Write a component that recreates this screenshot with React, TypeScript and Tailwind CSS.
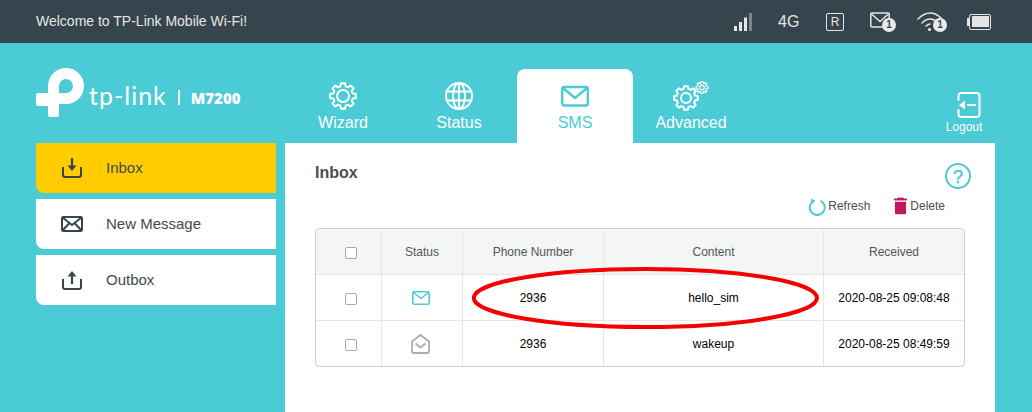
import React from "react";

function gearPath(cx: number, cy: number, ro: number, ri: number, teeth = 8) {
  const pts: string[] = [];
  const step = (Math.PI * 2) / teeth;
  for (let i = 0; i < teeth; i++) {
    const a = i * step - Math.PI / 2;
    const p = (r: number, d: number) => `${(cx + r * Math.cos(a + d * step)).toFixed(2)} ${(cy + r * Math.sin(a + d * step)).toFixed(2)}`;
    pts.push(`${i === 0 ? "M" : "L"}${p(ri, -0.34)}`, `L${p(ro, -0.2)}`, `L${p(ro, 0.2)}`, `L${p(ri, 0.34)}`);
  }
  return pts.join(" ") + " Z";
}

const Gear = () => (
  <svg width="28" height="28" viewBox="0 0 28 28" fill="none" stroke="white" strokeWidth="2" strokeLinejoin="round">
    <path d={gearPath(14, 14, 13, 10)} />
    <circle cx="14" cy="14" r="6" />
  </svg>
);

const Globe = () => (
  <svg width="28" height="28" viewBox="0 0 28 28" fill="none" stroke="white" strokeWidth="2">
    <circle cx="14" cy="14" r="13" />
    <ellipse cx="14" cy="14" rx="6" ry="13" />
    <path d="M14 1v26M2.5 9.5h23M2.5 18.500h23" />
  </svg>
);

const TabMail = () => (
  <svg width="28" height="28" viewBox="0 0 28 28" fill="none" stroke="#4acbd6" strokeWidth="2.4" strokeLinejoin="round">
    <rect x="1.200" y="5" width="25.600" height="18.500" rx="2" />
    <path d="M2 6l12 10L26 6" />
  </svg>
);

const GearDouble = () => (
  <svg width="36" height="30" viewBox="0 0 36 30" fill="none" stroke="white" strokeLinejoin="round">
    <g strokeWidth="2">
      <path d={gearPath(13, 17, 12, 9.400)} />
      <circle cx="13" cy="17" r="5" />
    </g>
    <g strokeWidth="1.300">
      <path d={gearPath(29, 6.500, 6, 4.600)} />
      <circle cx="29" cy="6.500" r="2.300" />
    </g>
  </svg>
);

const Logo = () => (
  <svg width="48" height="49" viewBox="0 0 48 49" fill="white" fillRule="evenodd" aria-hidden className="shrink-0">
    <path d="M12 18A18 18 0 1 1 30 36H23V47Q23 49 21 49H14Q12 49 12 47V38H2Q0 38 0 36V27Q0 25 2 25H12Z M23 25V18A7 7 0 1 1 30 25Z" />
  </svg>
);

const StatusIcons = () => (
  <div className="flex items-center">
    <svg width="18" height="18" viewBox="0 0 18 18">
      <rect x="0" y="13" width="3" height="5" fill="#e6e6e6" />
      <rect x="5" y="9" width="3" height="9" fill="#e6e6e6" />
      <rect x="10" y="4.500" width="3" height="13.500" fill="#e6e6e6" />
      <rect x="15" y="0" width="3" height="18" fill="#7a858a" />
    </svg>
    <span className="ml-[26px] w-[22px] text-[16px] leading-[20px] text-[#e6e6e6]">4G</span>
    <div className="ml-[26px] flex h-[18px] w-[18px] items-center justify-center rounded-[2px] border-[1.500px] border-[#e6e6e6] text-[12px] leading-none text-[#e6e6e6]">R</div>
    <div className="relative ml-[26px] h-[20px] w-[26px]">
      <svg width="20" height="16" viewBox="0 0 20 16" fill="none" stroke="#e6e6e6" strokeWidth="1.500" className="absolute left-0 top-0">
        <rect x="0.800" y="1" width="18.400" height="14" rx="1" />
        <path d="M1 1.500l9 8 9-8" />
      </svg>
      <div className="absolute left-[12px] top-[6px] flex h-[14px] w-[14px] items-center justify-center rounded-full bg-[#e9e9e9] text-[10px] font-bold leading-none text-[#36454d]">1</div>
    </div>
    <div className="relative ml-[21px] h-[20px] w-[30px]">
      <svg width="26" height="20" viewBox="0 0 26 20" fill="none" stroke="#e6e6e6" strokeWidth="1.500" className="absolute left-0 top-0" strokeLinecap="round">
        <path d="M1 7C5 3 9 1 13 1s8 2 11 5" />
        <path d="M5 11c2.500-2.500 5-4 8-4s5 1 7 3" />
        <path d="M9 14c1.300-1 2.500-2 4-2" />
        <circle cx="12.500" cy="17.500" r="0.800" fill="#e6e6e6" />
      </svg>
      <div className="absolute left-[16px] top-[6px] flex h-[14px] w-[14px] items-center justify-center rounded-full bg-[#e9e9e9] text-[10px] font-bold leading-none text-[#36454d]">1</div>
    </div>
    <div className="ml-[20px] flex h-[16px] items-center">
      <div className="h-[8px] w-[2px] bg-[#e6e6e6]" />
      <div className="h-[16px] w-[22px] rounded-[2px] border-[1.500px] border-[#e6e6e6] p-[1.500px]">
        <div className="h-full w-full bg-[#e4e4e4]" />
      </div>
    </div>
  </div>
);

const tabs = [
  { label: "Wizard", icon: <Gear /> },
  { label: "Status", icon: <Globe /> },
  { label: "SMS", icon: <TabMail />, active: true },
  { label: "Advanced", icon: <GearDouble /> },
];

const InboxIcon = () => (
  <svg width="22" height="22" viewBox="0 0 22 22" fill="none" stroke="#36454d" strokeWidth="2">
    <path d="M2 10v8q0 2 2 2h14q2 0 2-2v-8" />
    <path d="M11 1v8" strokeWidth="2.200" />
    <path d="M6.500 8.500h9L11 14z" fill="#36454d" strokeWidth="0" />
  </svg>
);
const OutboxIcon = () => (
  <svg width="22" height="22" viewBox="0 0 22 22" fill="none" stroke="#36454d" strokeWidth="2">
    <path d="M2 10v8q0 2 2 2h14q2 0 2-2v-8" />
    <path d="M11 7v8" strokeWidth="2.200" />
    <path d="M6.500 7.500h9L11 2z" fill="#36454d" strokeWidth="0" />
  </svg>
);
const NewMsgIcon = () => (
  <svg width="22" height="16" viewBox="0 0 22 16" fill="none" stroke="#36454d" strokeWidth="2" strokeLinejoin="round">
    <rect x="1" y="1" width="20" height="14" rx="1.500" />
    <path d="M1.500 1.500L11 9l9.500-7.500M1.500 14.500L8 7.500M20.500 14.500L14 7.500" />
  </svg>
);

const side = [
  { label: "Inbox", icon: <InboxIcon />, active: true },
  { label: "New Message", icon: <NewMsgIcon /> },
  { label: "Outbox", icon: <OutboxIcon /> },
];

const Check = () => <div className="ml-[5px] mt-[2px] h-[12px] w-[12px] rounded-[2px] border border-[#a9a9a9] bg-white" />;

const ReadMail = () => (
  <svg width="19" height="20" viewBox="0 0 19 20" fill="none" stroke="#adadad" strokeWidth="1.800" strokeLinejoin="round" className="mr-[3px]">
    <path d="M1 7.500L9.500 1 18 7.500V17.500q0 1.500-1.500 1.500h-14Q1 19 1 17.500z" />
    <path d="M4.500 9.500L9.500 13.500 14.500 9.500" />
  </svg>
);
const NewMail = () => (
  <svg width="18" height="14" viewBox="0 0 18 14" fill="none" stroke="#4acbd6" strokeWidth="1.600" strokeLinejoin="round" className="mr-[3px]">
    <rect x="0.800" y="0.800" width="16.400" height="12.400" rx="1.500" />
    <path d="M1.500 1.500L9 7.500l7.500-6" />
  </svg>
);

const rows = [
  { icon: <NewMail />, phone: "2936", content: "hello_sim", date: "2020-08-25 09:08:48" },
  { icon: <ReadMail />, phone: "2936", content: "wakeup", date: "2020-08-25 08:49:59" },
];

const cols = "grid grid-cols-[65px_81px_141px_220px_1fr]";
const cell = "flex items-center justify-center border-l border-[#e6e6e6] first:border-l-0";

export default function App() {
  return (
    <div className="relative h-[412px] w-[1032px] overflow-hidden bg-[#4acbd6] font-['Liberation_Sans',Arial,sans-serif]">
      <header className="flex h-[43px] items-center justify-between bg-[#36454d] pl-[36px] pr-[41px]">
        <span className="text-[14px] text-[#e6e6e6]">Welcome to TP-Link Mobile Wi-Fi!</span>
        <StatusIcons />
      </header>

      <div className="flex h-[100px]">
        <div className="ml-[36px] flex w-[249px] items-start pt-[25px]">
          <Logo />
          <span className="ml-[5px] mt-[9px] font-['Lato',sans-serif] text-[25px] font-normal leading-[36px] tracking-[1px] text-white">tp-link</span>
          <div className="ml-[11px] mt-[22px] h-[15px] w-[2px] bg-white" />
          <span className="ml-[11px] mt-[20px] font-['Open_Sans',sans-serif] text-[15px] font-extrabold leading-[20px] text-white">M7200</span>
        </div>
        <nav className="flex items-end">
          {tabs.map((t) => (
            <div key={t.label} className={`flex h-[74px] w-[116px] flex-col items-center rounded-t-[8px] ${t.active ? "bg-white text-[#4acbd6]" : "text-white"}`}>
              <div className="mt-[13px] flex h-[28px] items-center justify-center">{t.icon}</div>
              <span className="mt-[1px] text-[16px] leading-[24px]">{t.label}</span>
            </div>
          ))}
        </nav>
        <div className="ml-auto mr-[49px] flex w-[38px] flex-col items-center pt-[49px]">
          <svg width="24" height="26" viewBox="0 0 24 26" fill="none" stroke="white" strokeWidth="2" className="ml-[10px]">
            <path d="M1.500 8V4q0-3 3-3h15q3 0 3 3v18q0 3-3 3h-15q-3 0-3-3v-4" strokeLinecap="round" />
            <path d="M2 13l6-4.500v9z" fill="white" stroke="none" />
            <path d="M10 13h9" />
          </svg>
          <span className="mt-[2px] whitespace-nowrap text-[12px] leading-[14px] text-white">Logout</span>
        </div>
      </div>

      <div className="flex h-[269px]">
        <aside className="ml-[36px] flex w-[240px] flex-col gap-[6px]">
          {side.map((s) => (
            <div key={s.label} className={`flex h-[50px] items-center rounded-bl-[8px] ${s.active ? "bg-[#ffcc00]" : "bg-white"}`}>
              <div className="ml-[25px] flex w-[22px] items-center justify-center">{s.icon}</div>
              <span className="ml-[23px] text-[15px] text-[#414b50]">{s.label}</span>
            </div>
          ))}
        </aside>
        <main className="ml-[9px] w-[710px] bg-white px-[30px]">
          <div className="flex h-[41px] items-start justify-between">
            <h2 className="mt-[20px] text-[16px] font-bold leading-[20px] text-[#4d4d4d]">Inbox</h2>
            <svg width="26" height="26" viewBox="0 0 26 26" fill="none" stroke="#4acbd6" strokeWidth="2" className="mr-[-6px] mt-[20px]">
              <circle cx="13" cy="13" r="12" />
              <text x="13" y="19.500" textAnchor="middle" fontSize="18" fill="#4acbd6" stroke="#4acbd6" strokeWidth="0.500" fontFamily="Liberation Sans">?</text>
            </svg>
          </div>
          <div className="flex h-[44px] items-center justify-end pr-[20px]">
            <svg width="18" height="18" viewBox="0 0 18 18" fill="none" stroke="#4acbd6" strokeWidth="2" className="mr-[2px] mt-[2px]">
              <path d="M6 2.800A7.500 7.500 0 1 0 12.500 2.800" />
              <path d="M2.700 0.500l4.500 2-3 3.500z" fill="#4acbd6" stroke="none" />
            </svg>
            <span className="text-[12px] text-[#4d4d4d]">Refresh</span>
            <svg width="13" height="18" viewBox="0 0 14 18" className="ml-[24px] mr-[3px]" fill="#c2185b">
              <rect x="0" y="1" width="14" height="2" />
              <rect x="3.500" y="0" width="7" height="2" />
              <path d="M1 4.500h12V16q0 2-2 2H3q-2 0-2-2z" />
            </svg>
            <span className="text-[12px] text-[#4d4d4d]">Delete</span>
          </div>
          <div className="overflow-hidden rounded-[4px] border border-[#cfcfcf] text-[12px]">
            <div className={`${cols} h-[45px] bg-[#f4f5f5] bg-[radial-gradient(#e9ebeb_0.5px,transparent_0.5px)] bg-[length:6px_6px] text-[#555]`}>
              <div className={cell}><Check /></div>
              <div className={cell}>Status</div>
              <div className={cell}>Phone Number</div>
              <div className={cell}>Content</div>
              <div className={cell}>Received</div>
            </div>
            {rows.map((r) => (
              <div key={r.content} className={`${cols} h-[46px] border-t border-[#e6e6e6] text-black`}>
                <div className={cell}><Check /></div>
                <div className={cell}>{r.icon}</div>
                <div className={cell}>{r.phone}</div>
                <div className={cell}>{r.content}</div>
                <div className={cell}>{r.date}</div>
              </div>
            ))}
          </div>
        </main>
      </div>

      <svg width="352" height="66" viewBox="0 0 352 66" fill="none" className="pointer-events-none absolute left-[469px] top-[265px]">
        <ellipse cx="176.400" cy="33" rx="171.600" ry="29" stroke="#f50000" strokeWidth="4" />
      </svg>
    </div>
  );
}
